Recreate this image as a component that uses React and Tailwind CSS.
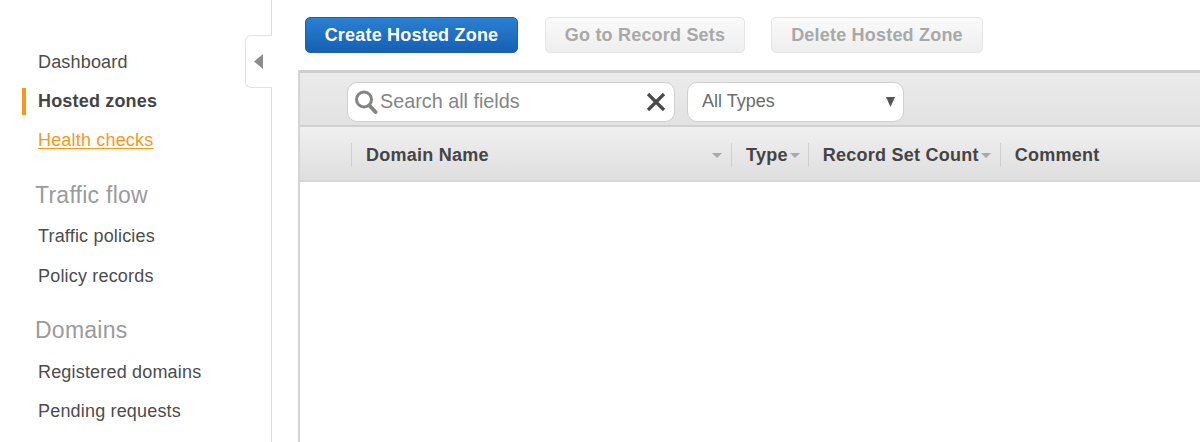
const NavItem = ({ label, active, link }) => (
  <div className="relative h-[39px] flex items-center pl-[38px] tracking-[0.18px]">
    {active && <span className="absolute left-[22px] top-[6px] w-1 h-[27px] bg-[#f7981d]" />}
    <span className={active ? "font-bold text-[#444]" : link ? "text-[#f7981d] underline underline-offset-2 decoration-1" : "text-[#4c4c4c]"}>
      {label}
    </span>
  </div>
)

const NavHeading = ({ label, className }) => (
  <div className={"pl-9 -ml-px text-[23px] leading-[28px] tracking-[0.25px] text-[#9b9b9b] " + className}>{label}</div>
)

const ActionButton = ({ label, primary, className }) => (
  <button
    className={
      "h-[36px] pt-px rounded-[5px] border text-[18px] font-bold tracking-[0.2px] " +
      (primary
        ? "border-[#1a5fa8] bg-gradient-to-b from-[#2a80d2] to-[#1560b4] text-white "
        : "border-[#e4e4e4] bg-gradient-to-b from-[#fafafa] to-[#eeeeee] text-[#a8a8a8] ") +
      className
    }
  >
    {label}
  </button>
)

const SortCaret = ({ className }) => (
  <svg width="10" height="5" viewBox="0 0 10 5" className={className}>
    <path d="M0 0h10L5 5z" fill="#a9a9a9" />
  </svg>
)

const Divider = () => <span className="w-px h-6 border-l border-[#cfcfcf]" />

export default function App() {
  return (
    <div className="h-[442px] w-[1200px] flex overflow-hidden bg-white text-[18px] font-['Liberation_Sans',Arial,sans-serif]">
      <aside className="relative w-[272px] shrink-0 border-r border-[#dcdcdc] pt-[43px]">
        <NavItem label="Dashboard" />
        <NavItem label="Hosted zones" active />
        <NavItem label="Health checks" link />
        <NavHeading label="Traffic flow" className="mt-[21px] mb-[8px]" />
        <div className="flex flex-col gap-px">
          <NavItem label="Traffic policies" />
          <NavItem label="Policy records" />
        </div>
        <NavHeading label="Domains" className="mt-[20px] mb-[9px]" />
        <NavItem label="Registered domains" />
        <NavItem label="Pending requests" />
        <div className="absolute left-[245px] top-[35px] w-[27px] h-[53px] flex items-center justify-center pr-[1px] bg-white border border-r-0 border-[#e2e2e2] rounded-l-[6px]">
          <svg width="9" height="15" viewBox="0 0 9 15">
            <path d="M9 0v15L0 7.5z" fill="#8c8c8c" />
          </svg>
        </div>
      </aside>

      <main className="flex-1 min-w-0 pl-[26px]">
        <div className="flex items-start pt-[17px] pl-[7px] h-[70px]">
          <ActionButton primary label="Create Hosted Zone" className="w-[213px]" />
          <ActionButton label="Go to Record Sets" className="w-[200px] ml-[27px]" />
          <ActionButton label="Delete Hosted Zone" className="w-[212px] ml-[26px]" />
        </div>

        <div className="h-[372px] border-l-2 border-[#d4d4d4]">
          <div className="h-[57px] flex items-center pl-[47px] pt-[5px] border-t-[3px] border-b-2 border-t-[#cfcfcf] border-b-[#d0d0d0] bg-gradient-to-b from-[#ebebeb] to-[#e2e2e2]">
            <div className="w-[328px] h-[40px] flex items-center bg-white border border-[#cfcfcf] rounded-[10px] pl-[6px] pr-[6px]">
              <svg width="24" height="26" viewBox="0 0 24 26" fill="none" className="shrink-0">
                <circle cx="10" cy="10.5" r="7.5" stroke="#858585" strokeWidth="3" />
                <path d="M15.5 16.5L21.5 23" stroke="#858585" strokeWidth="4" strokeLinecap="round" />
              </svg>
              <span className="ml-[2px] text-[19.8px] text-[#858585] flex-1">Search all fields</span>
              <svg width="20" height="20" viewBox="0 0 20 20" className="shrink-0 -ml-1 mr-[2px]">
                <path d="M2 2L18 18M18 2L2 18" stroke="#4a4a4a" strokeWidth="3.2" />
              </svg>
            </div>
            <div className="w-[217px] h-[40px] ml-[12px] flex items-center bg-white border border-[#cfcfcf] rounded-[10px] pl-[14px] pr-[8px]">
              <span className="flex-1 text-[#6b6b6b]">All Types</span>
              <svg width="9" height="10" viewBox="0 0 9 10" className="shrink-0">
                <path d="M0 0h9L4.5 10z" fill="#555" />
              </svg>
            </div>
          </div>

          <div className="h-[55px] flex items-center pl-[51px] pt-[3px] border-b-2 border-[#d6d6d6] bg-gradient-to-b from-[#f0f0f0] to-[#dedede] font-bold text-[#444] tracking-[0.25px]">
            <Divider />
            <div className="w-[379px] flex items-center pl-[14px]">
              <span className="flex-1">Domain Name</span>
              <SortCaret className="mr-[9px]" />
            </div>
            <Divider />
            <div className="flex items-center pl-[14px] pr-[8px]">
              <span>Type</span>
              <SortCaret className="ml-[2px]" />
            </div>
            <Divider />
            <div className="flex items-center pl-[14px] pr-[9px]">
              <span>Record Set Count</span>
              <SortCaret className="ml-[2px]" />
            </div>
            <Divider />
            <span className="pl-[14px]">Comment</span>
          </div>
        </div>
      </main>
    </div>
  )
}
